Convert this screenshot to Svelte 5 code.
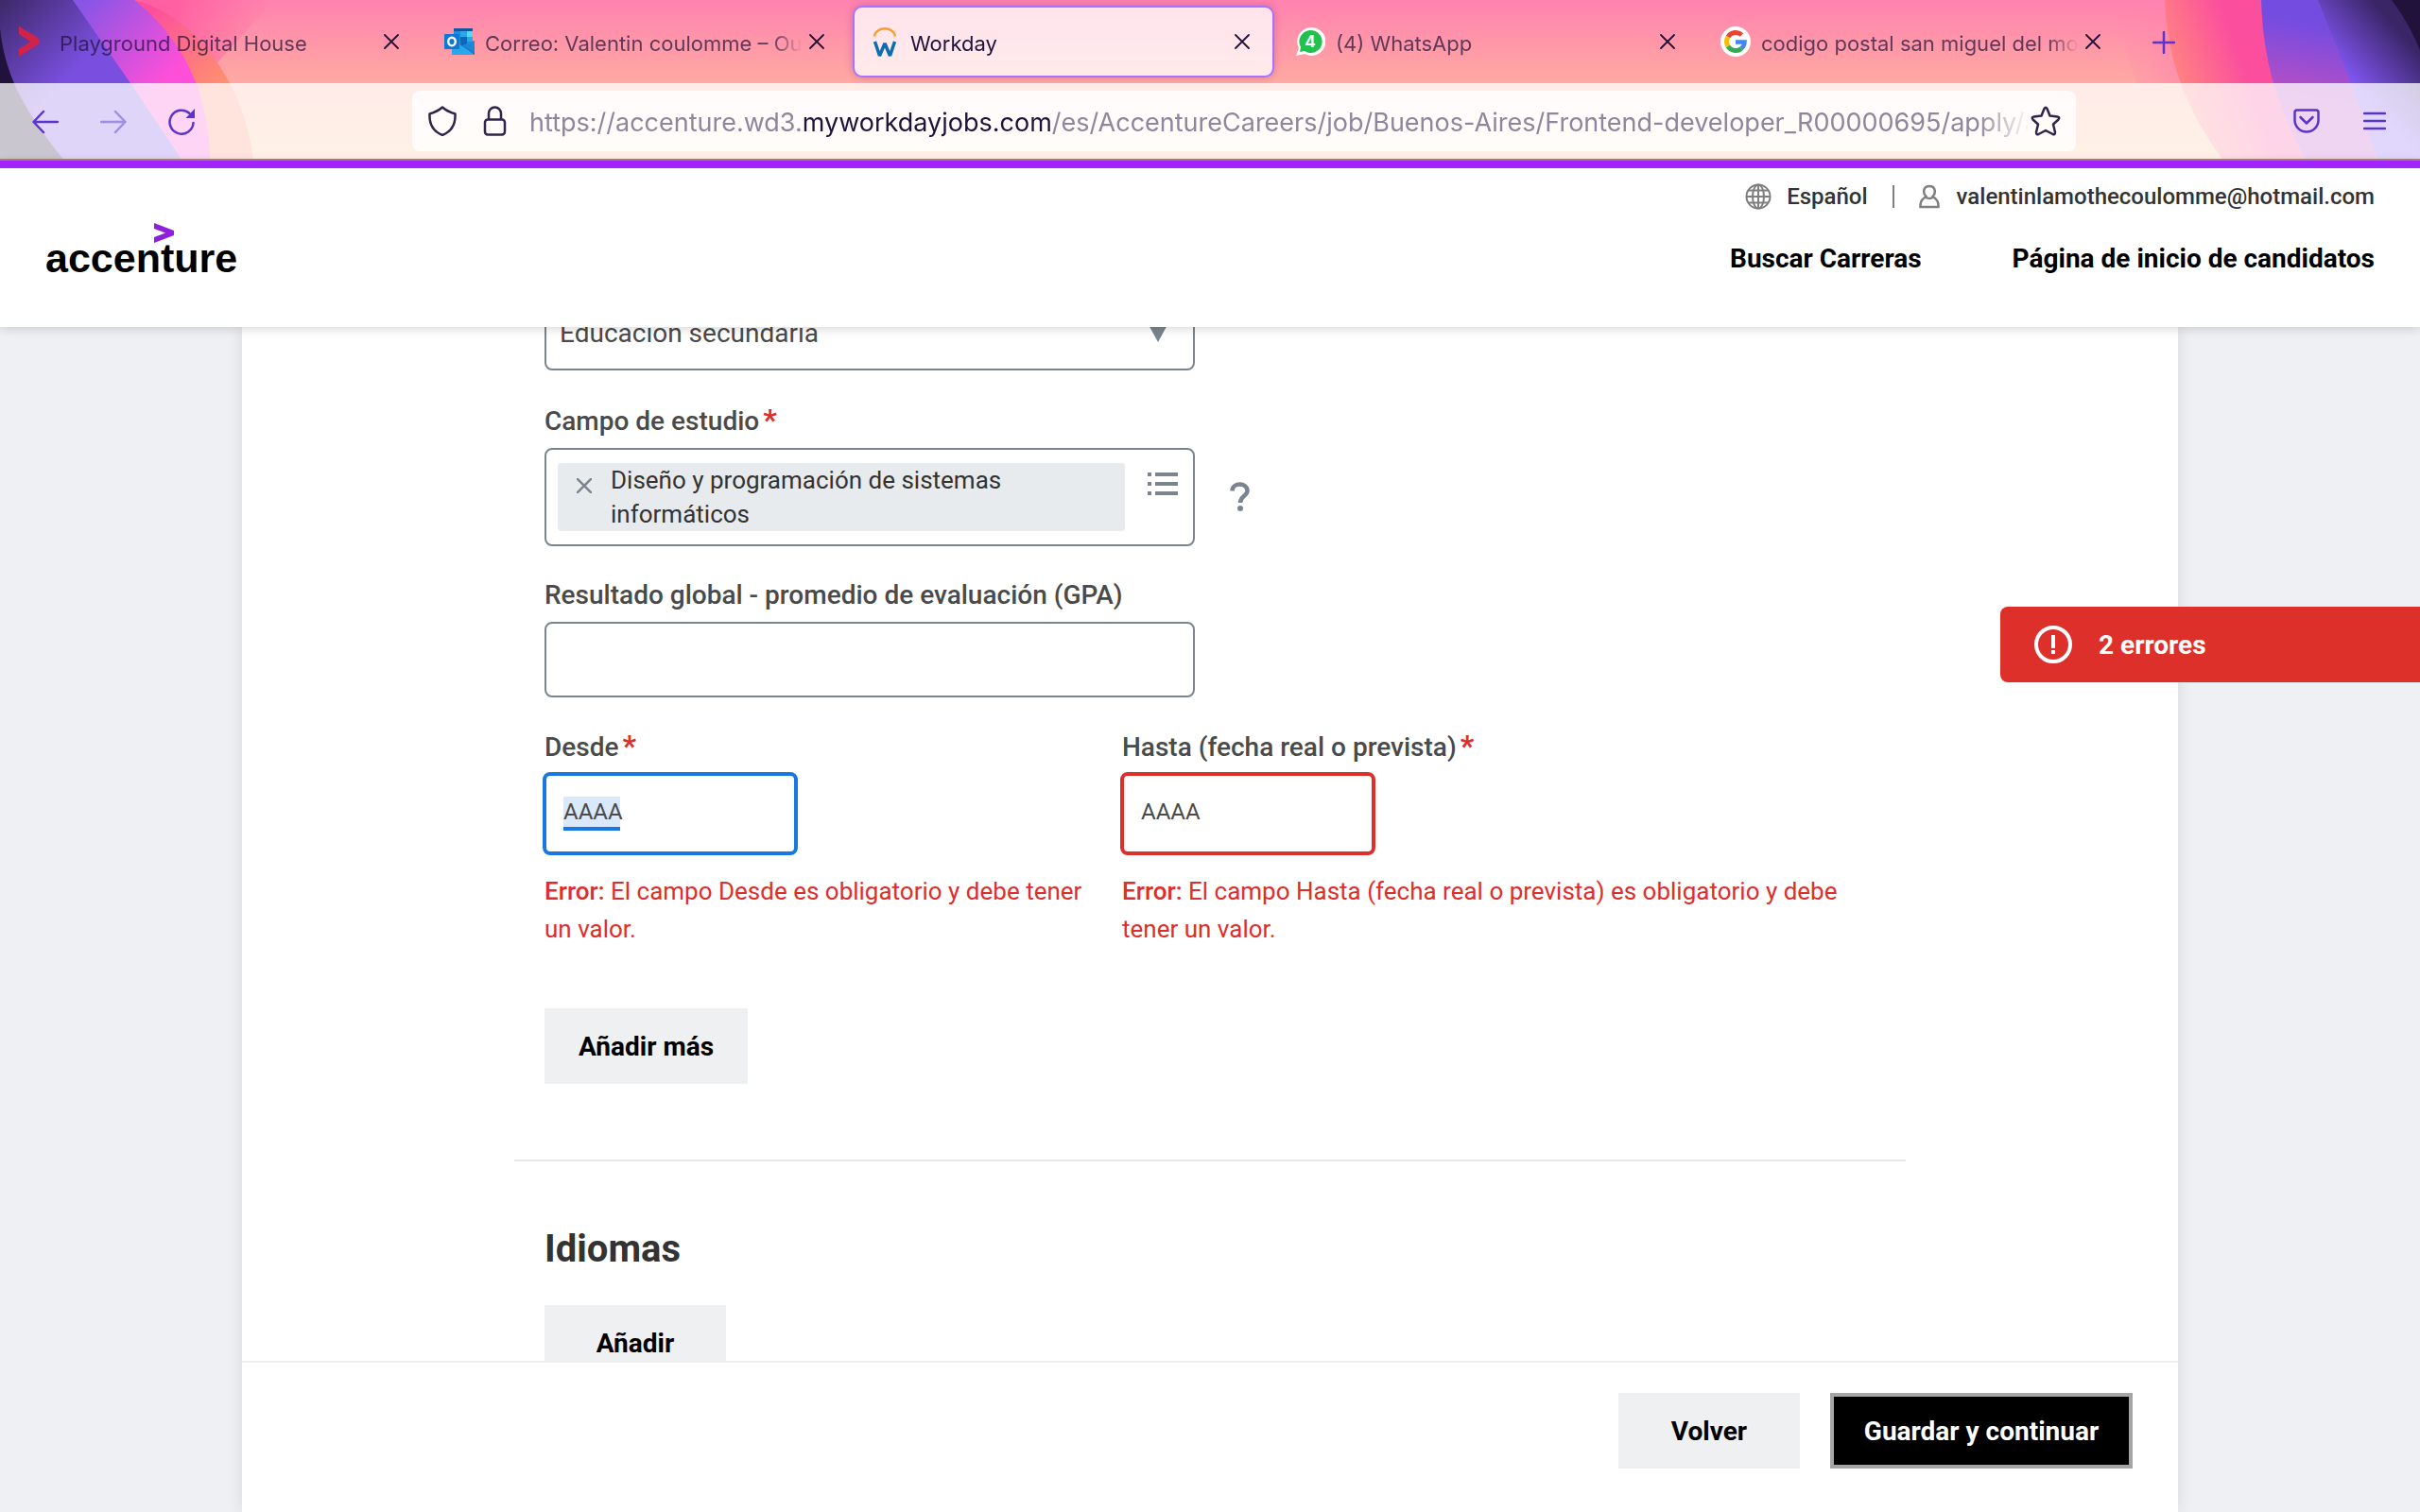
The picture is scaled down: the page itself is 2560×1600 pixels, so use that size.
<script>
  const tabs = [
    { icon: 'house', title: 'Playground Digital House' },
    { icon: 'outlook', title: 'Correo: Valentin coulomme – Outlook' },
    { icon: 'workday', title: 'Workday', active: true },
    { icon: 'whatsapp', title: '(4) WhatsApp' },
    { icon: 'google', title: 'codigo postal san miguel del monte' }
  ];
  let gpa = $state('');
  let from = $state('AAAA');
  let to = $state('AAAA');
</script>

<div class="window">
  <header class="chrome">
    <svg class="art left" viewBox="0 0 300 170" aria-hidden="true">
      <defs>
        <linearGradient id="l-glow" x1="0" x2="1"><stop offset="0.3" stop-color="#ff4f9c" /><stop offset="1" stop-color="#ff5c9c" stop-opacity="0" /></linearGradient>
        <linearGradient id="l-orange" gradientUnits="userSpaceOnUse" x1="160" y1="10" x2="235" y2="90"><stop offset="0" stop-color="#fc4f9c" /><stop offset="1" stop-color="#ff9070" /></linearGradient>
        <linearGradient id="l-magenta" gradientUnits="userSpaceOnUse" x1="95" y1="0" x2="180" y2="80"><stop offset="0" stop-color="#8a55e6" /><stop offset="1" stop-color="#ff4fd8" /></linearGradient>
        <linearGradient id="l-purple" gradientUnits="userSpaceOnUse" x1="5" y1="0" x2="80" y2="75"><stop offset="0" stop-color="#3f2a6c" /><stop offset="1" stop-color="#7a4fe0" /></linearGradient>
      </defs>
      <path d="M140 0H290L210 88H150Z" fill="url(#l-glow)" opacity="0.7" />
      <path d="M130 0H142C196 12 258 78 268 170H130Z" fill="url(#l-orange)" />
      <path d="M60 0H142C190 38 222 95 222 170H100Z" fill="url(#l-magenta)" />
      <path d="M0 0H77L138 88L193 170H0Z" fill="url(#l-purple)" />
      <path d="M0 30C5 75 20 110 68 170H0Z" fill="#20123a" />
    </svg>
    <svg class="art right" viewBox="0 0 340 170" aria-hidden="true">
      <defs>
        <linearGradient id="r-glow" x1="0" x2="1"><stop offset="0" stop-color="#ff85a8" stop-opacity="0" /><stop offset="1" stop-color="#fb7fb2" /></linearGradient>
        <linearGradient id="r-pink" gradientUnits="userSpaceOnUse" x1="72" y1="60" x2="140" y2="35"><stop offset="0" stop-color="#ff8480" /><stop offset="1" stop-color="#fb4f9e" /></linearGradient>
        <linearGradient id="r-purple" gradientUnits="userSpaceOnUse" x1="200" y1="20" x2="185" y2="100"><stop offset="0" stop-color="#744ce0" /><stop offset="1" stop-color="#bc4fc4" /></linearGradient>
        <linearGradient id="r-violet" gradientUnits="userSpaceOnUse" x1="270" y1="88" x2="325" y2="40"><stop offset="0" stop-color="#8055f0" /><stop offset="1" stop-color="#3a2566" /></linearGradient>
      </defs>
      <path d="M10 0H72L95 88H40Z" fill="url(#r-glow)" opacity="0.6" />
      <path d="M70 0C73 65 92 115 132 170H340V0Z" fill="url(#r-pink)" />
      <path d="M172 0C174 70 192 120 220 170H340V0Z" fill="url(#r-purple)" />
      <path d="M232 0L267 88L296 170H340V0Z" fill="url(#r-violet)" />
      <path d="M310 0Q327 22 340 53V0Z" fill="#20123a" />
    </svg>

    <nav class="tabs" aria-label="Pestañas">
      {#each tabs as tab}
        <div class="tab" class:active={tab.active}>
          <svg class="fav" viewBox="0 0 32 32" aria-hidden="true">
            {#if tab.icon === 'house'}
              <path d="M0 0L19 11Q25 16 19 20L0 32V24L12 16L0 8Z" fill="#d0224a" />
            {:else if tab.icon === 'outlook'}
              <path d="M10 2H30V18H10Z" fill="#1490df" />
              <path d="M10 2H30V5H10Z" fill="#0f559f" />
              <path d="M24 5H30V11H24Z" fill="#50d9ff" />
              <path d="M17 5H24V11H17ZM24 11H30V16H24Z" fill="#28a8ea" />
              <path d="M17 11H24V20H17Z" fill="#0f66b8" />
              <path d="M8 18L20 20L32 15V30H8Z" fill="#28a8ea" />
              <path d="M20 20L32 15V30Z" fill="#1a87d4" />
              <path d="M10 15L20 21L32 29" fill="none" stroke="#0f6cbd" />
              <rect y="8" width="16" height="16" rx="1" fill="#0f78d4" />
              <ellipse cx="8" cy="16" rx="3.8" ry="4.3" fill="none" stroke="#fff" stroke-width="2.4" />
            {:else if tab.icon === 'workday'}
              <path d="M5 10.500C7 -0.500 25 -0.500 27 10.500" fill="none" stroke="#f5a02c" stroke-width="2.500" />
              <path d="M5.500 16L10.500 31L16 18L21.500 31L26.500 16" fill="none" stroke="#0e6cb0" stroke-width="3.500" stroke-linejoin="bevel" />
            {:else if tab.icon === 'whatsapp'}
              <path d="M16 1A15 15 0 1 1 10 29L1 31L4 23A15 15 0 0 1 16 1Z" fill="#fff" />
              <path d="M16 4A12 12 0 1 1 10 26L5 27L6 22A12 12 0 0 1 16 4Z" fill="#22c04c" />
              <text x="16" y="22" text-anchor="middle" class="count">4</text>
            {:else}
              <circle cx="16" cy="16" r="16" fill="#fff" />
              <g fill="none" stroke-width="5">
                <path d="M8 11A9.500 9.500 0 0 1 22.500 9" stroke="#ea4335" />
                <path d="M8 11A9.500 9.500 0 0 0 8 21" stroke="#fbbc05" />
                <path d="M8 21A9.500 9.500 0 0 0 22 23.500" stroke="#34a853" />
                <path d="M16 16.500H25.500A9.500 9.500 0 0 1 22 23.500" stroke="#4285f4" stroke-width="4.500" />
              </g>
            {/if}
          </svg>
          <span class="title">{tab.title}</span>
          <button class="plain close" aria-label="Cerrar pestaña">
            <svg width="16" height="16" viewBox="0 0 16 16"><path d="M1 1L15 15M15 1L1 15" stroke="#20123a" stroke-width="1.800" stroke-linecap="round" /></svg>
          </button>
        </div>
      {/each}
      <button class="plain new-tab" aria-label="Nueva pestaña">
        <svg width="24" height="24" viewBox="0 0 24 24"><path d="M12 1V23M1 12H23" stroke="#5a34cc" stroke-width="2.500" stroke-linecap="round" /></svg>
      </button>
    </nav>

    <div class="toolbar">
      <div class="moves">
        <button class="plain" aria-label="Atrás"><svg width="28" height="28" viewBox="0 0 28 28"><path d="M12 3L1.500 14L12 25M2 14H27" class="line" /></svg></button>
        <button class="plain dim" aria-label="Adelante"><svg width="28" height="28" viewBox="0 0 28 28"><path d="M16 3L26.500 14L16 25M26 14H1" class="line" /></svg></button>
        <button class="plain" aria-label="Recargar"><svg width="28" height="28" viewBox="0 0 28 28"><path d="M26.500 15A12.500 12.500 0 1 1 22.500 5" class="line" /><path d="M28 0V10H18.500Z" fill="#5a34cc" /></svg></button>
      </div>
      <div class="address">
        <div class="badges">
          <svg width="32" height="32" viewBox="0 0 32 32" aria-hidden="true"><path d="M16 1.500C20 5 24.500 7 29.500 8.500C30 19 26 27 16 31C6 27 2 19 2.500 8.500C7.500 7 12 5 16 1.500Z" class="ink" /></svg>
          <svg width="28" height="32" viewBox="0 0 28 32" aria-hidden="true"><rect x="5" y="14.500" width="21" height="16" rx="3" class="ink" /><path d="M9 14V8A6.500 6.500 0 0 1 22 8V14" class="ink" /></svg>
        </div>
        <div class="url" role="textbox" tabindex="0" aria-label="Dirección">https://accenture.wd3.<b>myworkdayjobs.com</b>/es/AccentureCareers/job/Buenos-Aires/Frontend-developer_R00000695/apply/a</div>
        <button class="plain" aria-label="Marcar página"><svg width="32" height="32" viewBox="0 0 32 32"><path d="M14.500 3Q16 0.500 17.500 3L20.500 10.500L28.500 11.500Q31.500 12 29.500 14.500L24 19.500L26 28Q26 31 23.500 30L16 26L8.500 30Q6 31 6 28L8 19.500L2.500 14.500Q0.500 12 3.500 11.500L11.500 10.500Z" class="ink" /></svg></button>
      </div>
      <div class="tools">
        <button class="plain" aria-label="Guardar en Pocket"><svg width="28" height="26" viewBox="0 0 28 26"><path d="M4 1.500H24Q26.500 1.500 26.500 4V12A12.500 12.500 0 0 1 1.500 12V4Q1.500 1.500 4 1.500ZM7.500 9L14 15.500L20.500 9" class="line" /></svg></button>
        <button class="plain" aria-label="Menú"><svg width="24" height="20" viewBox="0 0 24 20"><path d="M1 2H23M1 10H23M1 18H23" class="line" /></svg></button>
      </div>
    </div>
  </header>

  <header class="site">
    <a class="logo" href="#inicio" aria-label="accenture">
      <svg width="22" height="22" viewBox="0 0 22 22" aria-hidden="true"><path d="M0 0L21 8V13L0 21V15L12 10.500L0 6Z" fill="#8f1fdc" /></svg>
      <span>accenture</span>
    </a>
    <div class="site-links">
      <div class="account">
        <button class="plain item">
          <svg width="28" height="28" viewBox="0 0 28 28" aria-hidden="true"><g fill="none" stroke="#7f7f7f" stroke-width="2"><circle cx="14" cy="14" r="12.500" /><ellipse cx="14" cy="14" rx="6" ry="12.500" /><path d="M14 1V27M1 14H27M3.500 7.500H24.500M3.500 20.500H24.500" /></g></svg>
          Español
        </button>
        <span class="bar"></span>
        <button class="plain item">
          <svg width="24" height="26" viewBox="0 0 24 26" aria-hidden="true"><path d="M7.500 13C4 10 4 2 11 2S18 10 14.500 13C18 15 21 18 20.500 24H1.500C1 18 4 15 7.500 13ZM7 14Q11 16 15 14" fill="none" stroke="#7f7f7f" stroke-width="2.500" /></svg>
          valentinlamothecoulomme@hotmail.com
        </button>
      </div>
      <nav class="main-nav">
        <a href="#buscar">Buscar Carreras</a>
        <a href="#candidatos">Página de inicio de candidatos</a>
      </nav>
    </div>
  </header>

  <main>
    <div class="card">
      <div class="scroll">
        <form id="solicitud" onsubmit={(e) => e.preventDefault()}>
          <div class="select-wrap">
            <select class="box" aria-label="Título"><option>Educación secundaria</option></select>
            <svg width="22" height="20" viewBox="0 0 22 20" aria-hidden="true"><path d="M0 0H22L11 20Z" fill="#7b858f" /></svg>
          </div>

          <div class="field">
            <label for="campo">Campo de estudio<i>*</i></label>
            <div class="with-help">
              <div class="box multi" id="campo" role="group">
                <div class="chip">
                  <button class="plain" type="button" aria-label="Quitar"><svg width="16" height="16" viewBox="0 0 16 16"><path d="M0 0L16 16M16 0L0 16" stroke="#7b858f" stroke-width="2.500" /></svg></button>
                  <span>Diseño y programación de sistemas informáticos</span>
                </div>
                <button class="plain list" type="button" aria-label="Ver opciones"><svg width="32" height="24" viewBox="0 0 32 24"><path d="M0 2H4M8 2H32M0 12H4M8 12H32M0 22H4M8 22H32" stroke="#7b858f" stroke-width="4" /></svg></button>
              </div>
              <button class="plain" type="button" aria-label="Ayuda"><svg width="24" height="32" viewBox="0 0 24 32"><path d="M3.500 9.500C3.500 0.500 19.500 0 19.500 9.500C19.500 15 12 14.500 12 22" fill="none" stroke="#7b858f" stroke-width="4.500" /><circle cx="12" cy="28" r="3" fill="#7b858f" /></svg></button>
            </div>
          </div>

          <div class="field">
            <label for="gpa">Resultado global - promedio de evaluación (GPA)</label>
            <input class="box" id="gpa" type="text" bind:value={gpa} />
          </div>

          <div class="dates">
            <div class="field">
              <label for="desde">Desde<i>*</i></label>
              <div class="date focused"><input id="desde" type="text" bind:value={from} /></div>
              <p class="error"><b>Error:</b> El campo Desde es obligatorio y debe tener un valor.</p>
            </div>
            <div class="field">
              <label for="hasta">Hasta (fecha real o prevista)<i>*</i></label>
              <div class="date invalid"><input id="hasta" type="text" bind:value={to} /></div>
              <p class="error"><b>Error:</b> El campo Hasta (fecha real o prevista) es obligatorio y debe tener un valor.</p>
            </div>
          </div>

          <button class="btn" type="button">Añadir más</button>
          <hr />
          <h2>Idiomas</h2>
          <button class="btn wide" type="button">Añadir</button>
        </form>
      </div>
      <footer>
        <button class="btn wide" type="button">Volver</button>
        <button class="btn primary" type="submit" form="solicitud">Guardar y continuar</button>
      </footer>
    </div>
    <button class="toast">
      <svg width="40" height="40" viewBox="0 0 40 40" aria-hidden="true"><circle cx="20" cy="20" r="18" fill="none" stroke="#fff" stroke-width="4" /><path d="M20 10V24M20 26V30" stroke="#fff" stroke-width="4" /></svg>
      2 errores
    </button>
  </main>
</div>

<style>
  :global(body) { margin: 0; }
  :global(*) { box-sizing: border-box; }
  .window {
    height: 100vh;
    display: flex;
    flex-direction: column;
    overflow: hidden;
    background: #eff0f3;
    font-family: Roboto, sans-serif;
    color: #4a4a4a;
  }
  svg { display: block; flex: none; }
  button { font: inherit; cursor: pointer; }
  .plain { border: 0; padding: 0; background: none; color: inherit; }

  .chrome {
    position: relative;
    flex: none;
    background: linear-gradient(#ff82b0 0, #ffaaa2 88px, #ffc896 168px);
    font-family: Inter, sans-serif;
  }
  .art { position: absolute; top: 0; height: 170px; }
  .left { left: 0; width: 300px; }
  .right { right: 0; width: 340px; }
  .tabs {
    position: relative;
    height: 88px;
    display: flex;
    align-items: center;
    gap: 4px;
    padding: 0 2px;
  }
  .tab {
    flex: 0 1 446px;
    min-width: 0;
    height: 76px;
    display: flex;
    align-items: center;
    gap: 11px;
    padding: 0 24px 0 16px;
    border: 2px solid transparent;
    border-radius: 10px;
    font-size: 22px;
    color: rgba(32, 18, 58, 0.72);
  }
  .active {
    background: rgba(255, 255, 255, 0.77);
    border-color: #ac70ff;
    color: #20123a;
    box-shadow: 0 0 8px rgba(128, 50, 120, 0.35);
  }
  .fav { width: 32px; height: 32px; }
  .count { font: bold 17px Inter, sans-serif; fill: #fff; }
  .title {
    flex: 1;
    overflow: hidden;
    white-space: nowrap;
    padding-top: 3px;
    line-height: 32px;
    mask-image: linear-gradient(to left, transparent, #000 32px);
  }
  .close { margin-left: -4px; }
  .new-tab { padding: 2px 25px 0; }
  .toolbar {
    position: relative;
    height: 82px;
    display: flex;
    align-items: center;
    gap: 230px;
    padding: 0 36px 0 34px;
    background: rgba(255, 255, 255, 0.76);
    border-bottom: 2px solid #a98578;
  }
  .moves { display: flex; gap: 44px; padding-top: 2px; }
  .dim { opacity: 0.45; }
  .line { fill: none; stroke: #5a34cc; stroke-width: 2.5; stroke-linecap: round; stroke-linejoin: round; }
  .ink { fill: none; stroke: #32244c; stroke-width: 2.5; stroke-linejoin: round; }
  .address {
    flex: 1;
    min-width: 0;
    height: 64px;
    display: flex;
    align-items: center;
    padding: 0 16px;
    border-radius: 8px;
    background: rgba(255, 255, 255, 0.8);
  }
  .badges { display: flex; gap: 24px; padding-right: 24px; }
  .url {
    flex: 1;
    min-width: 0;
    overflow: hidden;
    white-space: nowrap;
    padding-top: 3px;
    line-height: 40px;
    font-size: 27px;
    color: #90859c;
    mask-image: linear-gradient(to left, transparent, #000 56px);
  }
  .url b { font-weight: 400; color: #20123a; }
  .tools { display: flex; align-items: center; gap: 46px; }

  .site {
    position: relative;
    z-index: 2;
    flex: none;
    height: 176px;
    display: flex;
    justify-content: space-between;
    padding: 10px 48px 0;
    border-top: 8px solid #a024fb;
    background: #fff;
    box-shadow: 0 2px 10px rgba(0, 0, 0, 0.16);
  }
  .logo {
    display: flex;
    flex-direction: column;
    padding-top: 48px;
    color: #000;
    text-decoration: none;
    font: bold 43px/42px "Liberation Sans", sans-serif;
  }
  .logo svg { margin-left: 115px; }
  .logo span { margin-top: -6px; }
  .site-links { display: flex; flex-direction: column; align-items: flex-end; gap: 26px; }
  .account { display: flex; align-items: center; gap: 26px; font-size: 24px; font-weight: 500; color: #333; line-height: 40px; }
  .item { display: flex; align-items: center; gap: 16px; }
  .bar { width: 2px; height: 24px; background: #7f7f7f; }
  .main-nav { display: flex; gap: 96px; font-size: 28px; line-height: 40px; font-weight: 700; }
  .main-nav a { color: #000; text-decoration: none; }

  main { position: relative; flex: 1; min-height: 0; display: flex; justify-content: center; }
  .card {
    width: 80%;
    display: flex;
    flex-direction: column;
    background: #fff;
    box-shadow: 0 0 16px rgba(0, 0, 0, 0.1);
  }
  .scroll { flex: 1; min-height: 0; overflow: hidden; padding: 0 288px; }
  form {
    display: flex;
    flex-direction: column;
    align-items: flex-start;
    margin-top: -34px;
    padding: 0 32px;
  }
  .box {
    width: 688px;
    height: 80px;
    padding: 0 14px;
    border: 2px solid #7b858f;
    border-radius: 8px;
    background: #fff;
    font: 26px Roboto, sans-serif;
    color: #4a4a4a;
  }
  .select-wrap { display: grid; align-items: center; margin-bottom: 2px; }
  .select-wrap > * { grid-area: 1 / 1; }
  .select-wrap select { appearance: none; font-size: 28px; }
  .select-wrap svg { justify-self: end; margin-right: 28px; pointer-events: none; }
  .field { display: flex; flex-direction: column; margin-top: 32px; }
  label { padding-bottom: 8px; font-size: 28px; line-height: 40px; font-weight: 500; }
  label i { margin-left: 4px; color: #de2e2b; font-size: 32px; font-style: normal; font-weight: 700; line-height: 32px; }
  .with-help { display: flex; align-items: center; gap: 36px; }
  .multi { height: auto; display: flex; align-items: flex-start; justify-content: space-between; padding: 14px 12px; }
  .chip {
    width: 600px;
    display: flex;
    align-items: flex-start;
    gap: 20px;
    padding: 0 20px;
    border-radius: 4px;
    background: #e8ebed;
    color: #333;
    line-height: 36px;
  }
  .chip button { padding-top: 16px; }
  .list { padding: 10px 4px; }
  .dates { align-self: stretch; display: grid; grid-template-columns: 571px 1fr; gap: 40px; }
  .dates .field { margin-top: 33px; }
  .dates label { padding-bottom: 6px; }
  .date {
    width: 270px;
    height: 88px;
    display: flex;
    align-items: center;
    margin: 0 -2px;
    padding: 0 18px;
    border: 4px solid;
    border-radius: 8px;
  }
  .date input {
    width: 100%;
    height: 36px;
    padding: 0 0 4px;
    border: 0;
    background: none;
    font: 24px Roboto, sans-serif;
    color: #4a4a4a;
    outline: 0;
  }
  .focused { border-color: #1877e0; }
  .focused input {
    background:
      linear-gradient(#1877e0, #1877e0) 0 100% / 60px 4px no-repeat,
      linear-gradient(#d9e8fa, #d9e8fa) 0 0 / 60px 32px no-repeat;
  }
  .invalid { border-color: #dd302b; }
  .error { margin: 18px 0 0; font-size: 26px; line-height: 40px; color: #de2e2b; }
  .error b { font-weight: 500; }
  .btn {
    height: 80px;
    flex: none;
    padding: 0 36px;
    border: 0;
    background: #eff0f2;
    color: #000;
    font-size: 28px;
    font-weight: 700;
  }
  .wide { width: 192px; }
  form > .btn { margin-top: 64px; }
  hr { width: calc(100% + 64px); margin: 80px -32px 0; border: 0; border-top: 2px solid #e6e9ec; }
  h2 { margin: 64px 0 0; font-size: 40px; line-height: 58px; font-weight: 700; color: #333; }
  form > h2 + .btn { margin-top: 30px; }
  footer {
    display: flex;
    justify-content: flex-end;
    gap: 32px;
    padding: 32px 48px 46px;
    border-top: 2px solid #f0f0f1;
  }
  .primary { width: 320px; border: 4px solid #a5a5a5; padding: 0; background: #000; color: #fff; }
  .toast {
    position: absolute;
    z-index: 1;
    top: 296px;
    right: 0;
    width: 444px;
    height: 80px;
    display: flex;
    align-items: center;
    gap: 28px;
    padding: 0 36px;
    border: 0;
    border-radius: 8px 0 0 8px;
    background: #dd302b;
    color: #fff;
    font-size: 28px;
    font-weight: 700;
  }
</style>
